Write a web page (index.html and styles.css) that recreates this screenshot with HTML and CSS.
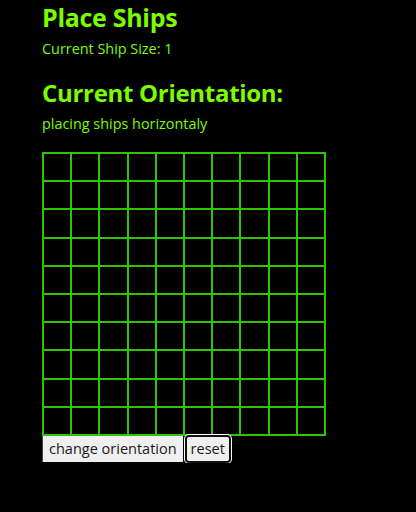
FILE: index.html
```html
<!DOCTYPE html>
<html>
<head>
<meta charset="utf-8">
<link rel="stylesheet" href="styles.css">
</head>
<body>
<div class="page">
  <h2 class="title">Place Ships</h2>
  <p class="info">Current Ship Size: 1</p>
  <h2 class="title second">Current Orientation:</h2>
  <p class="info mode">placing ships horizontaly</p>
  <div class="board">
    <div class="cell"></div><div class="cell"></div><div class="cell"></div><div class="cell"></div><div class="cell"></div><div class="cell"></div><div class="cell"></div><div class="cell"></div><div class="cell"></div><div class="cell"></div>
    <div class="cell"></div><div class="cell"></div><div class="cell"></div><div class="cell"></div><div class="cell"></div><div class="cell"></div><div class="cell"></div><div class="cell"></div><div class="cell"></div><div class="cell"></div>
    <div class="cell"></div><div class="cell"></div><div class="cell"></div><div class="cell"></div><div class="cell"></div><div class="cell"></div><div class="cell"></div><div class="cell"></div><div class="cell"></div><div class="cell"></div>
    <div class="cell"></div><div class="cell"></div><div class="cell"></div><div class="cell"></div><div class="cell"></div><div class="cell"></div><div class="cell"></div><div class="cell"></div><div class="cell"></div><div class="cell"></div>
    <div class="cell"></div><div class="cell"></div><div class="cell"></div><div class="cell"></div><div class="cell"></div><div class="cell"></div><div class="cell"></div><div class="cell"></div><div class="cell"></div><div class="cell"></div>
    <div class="cell"></div><div class="cell"></div><div class="cell"></div><div class="cell"></div><div class="cell"></div><div class="cell"></div><div class="cell"></div><div class="cell"></div><div class="cell"></div><div class="cell"></div>
    <div class="cell"></div><div class="cell"></div><div class="cell"></div><div class="cell"></div><div class="cell"></div><div class="cell"></div><div class="cell"></div><div class="cell"></div><div class="cell"></div><div class="cell"></div>
    <div class="cell"></div><div class="cell"></div><div class="cell"></div><div class="cell"></div><div class="cell"></div><div class="cell"></div><div class="cell"></div><div class="cell"></div><div class="cell"></div><div class="cell"></div>
    <div class="cell"></div><div class="cell"></div><div class="cell"></div><div class="cell"></div><div class="cell"></div><div class="cell"></div><div class="cell"></div><div class="cell"></div><div class="cell"></div><div class="cell"></div>
    <div class="cell"></div><div class="cell"></div><div class="cell"></div><div class="cell"></div><div class="cell"></div><div class="cell"></div><div class="cell"></div><div class="cell"></div><div class="cell"></div><div class="cell"></div>
  </div>
  <div class="controls">
    <button class="btn">change orientation</button>
    <button class="btn focused">reset</button>
  </div>
</div>
</body>
</html>
```
FILE: styles.css
```css
html, body {
  margin: 0;
  padding: 0;
  background: #000;
}
.page {
  padding: 1px 0 0 42px;
  font-family: "Open Sans", "Noto Sans", sans-serif;
  color: #7cfc00;
}
.title {
  margin: 0;
  font-size: 25px;
  line-height: 32px;
  font-weight: 700;
  letter-spacing: -0.3px;
}
.title.second {
  margin-top: 18px;
  font-size: 24px;
}
.info {
  margin: 6px 0 0;
  font-size: 14.4px;
  line-height: 20px;
}
.info.mode {
  margin-top: 5px;
}
.board {
  margin-top: 18px;
  width: max-content;
  display: grid;
  grid-template-columns: repeat(10, 28.2px);
  grid-auto-rows: 28.2px;
  border: 1px solid #2fc400;
}
.cell {
  box-sizing: border-box;
  border: 1px solid #2fc400;
}
.controls {
  display: flex;
  align-items: flex-start;
}
.btn {
  font-family: "Open Sans", "Noto Sans", sans-serif;
  font-size: 14.5px;
  line-height: 18px;
  color: #1a1a1a;
  background: #efefef;
  border: none;
  border-left: 1px solid #444;
  padding: 4px 6px 4px 6px;
  margin: 0;
  height: 26px;
}
.btn.focused {
  border: 2px solid #111;
  border-radius: 4px;
  padding: 0 4px;
  height: 28px;
  margin: -1px 0 0 2px;
  box-shadow: 0 0 0 1px #fff;
}
```
